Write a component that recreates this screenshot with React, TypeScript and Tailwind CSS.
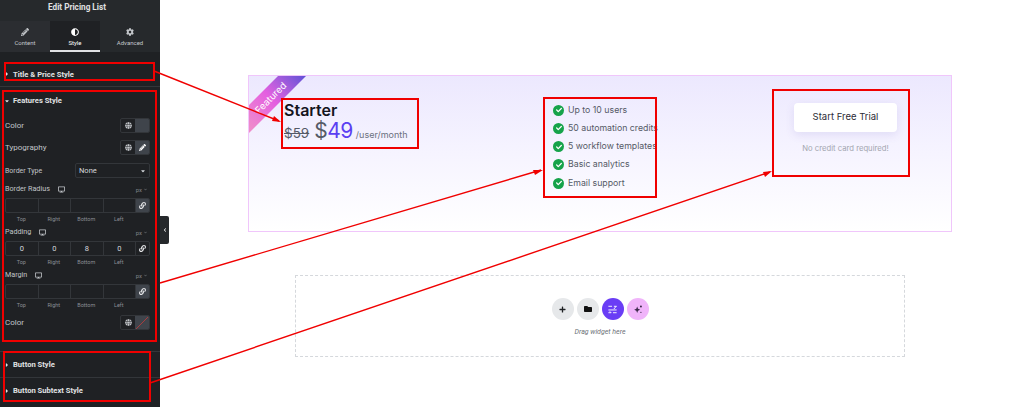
import { FaPencilAlt, FaAdjust, FaCog, FaGlobe, FaLink, FaDesktop, FaPlus, FaFolder, FaCaretRight, FaCaretDown, FaChevronLeft, FaChevronDown, FaCheck } from 'react-icons/fa';

function SectionHead({ label, open }: { label: string; open?: boolean }) {
  const Caret = open ? FaCaretDown : FaCaretRight;
  return (
    <div className="flex items-center gap-[3px] pl-[4px] text-[7.6px] font-bold text-[#e0e1e3]">
      <Caret className="w-[6px] h-[6px]" />
      <span>{label}</span>
    </div>
  );
}

function ColorRow({ label, slash, pen, className }: { label: string; slash?: boolean; pen?: boolean; className?: string }) {
  return (
    <div className={`flex items-center justify-between pl-[5px] pr-[10px] h-[15px] ${className ?? ''}`}>
      <span className="text-[8px] text-[#c2c5c9]">{label}</span>
      <div className="flex h-[15px] w-[30px] rounded-[2px] border border-[#33363a] overflow-hidden">
        <div className="flex-1 flex items-center justify-center">
          <FaGlobe className="w-[7px] h-[7px] text-[#c2c5c9]" />
        </div>
        <div className="flex-1 flex items-center justify-center bg-[#3f444b]">
          {pen && <FaPencilAlt className="w-[7px] h-[7px] text-white" />}
          {slash && (
            <svg viewBox="0 0 14 14" className="w-[14px] h-[14px]">
              <line x1="1" y1="13" x2="13" y2="1" stroke="#c23b3b" strokeWidth="0.8" />
            </svg>
          )}
        </div>
      </div>
    </div>
  );
}

function Dimension({ label, values, active, className }: { label: string; values: string[]; active?: boolean; className?: string }) {
  return (
    <div className={`pl-[5px] pr-[10px] ${className ?? ''}`}>
      <div className="flex items-center justify-between h-[12px]">
        <div className="flex items-center gap-[8px]">
          <span className="text-[7.2px] text-[#c2c5c9]">{label}</span>
          <FaDesktop className="w-[7px] h-[7px] text-[#c2c5c9]" />
        </div>
        <div className="flex items-center gap-[2px] text-[6px] text-[#7d8288] pr-[3px]">
          px <FaChevronDown className="w-[3px] h-[3px]" />
        </div>
      </div>
      <div className="flex h-[15px] mt-[3px] rounded-[2px] border border-[#33363a] overflow-hidden">
        {['Top', 'Right', 'Bottom', 'Left'].map((side, i) => (
          <div key={side} className="w-[32.5px] border-r border-[#33363a] flex items-center justify-center text-[7.5px] text-[#d5d8dc]">
            {values[i]}
          </div>
        ))}
        <div className={`flex-1 flex items-center justify-center ${active ? 'bg-[#3f444b]' : ''}`}>
          <FaLink className="w-[7px] h-[7px] text-[#e0e1e3]" />
        </div>
      </div>
      <div className="flex mt-[2px] h-[8px]">
        {['Top', 'Right', 'Bottom', 'Left'].map(side => (
          <div key={side} className="w-[32.5px] text-center text-[5.5px] leading-[8px] text-[#8a8e94]">{side}</div>
        ))}
      </div>
    </div>
  );
}

function Sidebar() {
  return (
    <aside className="w-[160px] shrink-0 h-full bg-[#1f2124] font-['Roboto',sans-serif] flex flex-col">
      <div className="h-[21px] pb-[6px] pr-[6px] bg-[#26292c] flex items-center justify-center text-[8.2px] font-bold text-[#e0e1e3]">
        Edit Pricing List
      </div>
      <div className="flex h-[31px] text-[#c2c5c9] bg-[#26292c]">
        <div className="w-[50px] flex flex-col items-center pt-[7px] gap-[3px] bg-[#2b2d31]">
          <FaPencilAlt className="w-[8px] h-[8px]" />
          <span className="text-[6px] leading-[8px]">Content</span>
        </div>
        <div className="w-[50px] flex flex-col items-center pt-[7px] gap-[3px] bg-[#1f2124] border-b-[2px] border-[#e0e1e3] text-white">
          <FaAdjust className="w-[8px] h-[8px]" />
          <span className="text-[6px] leading-[8px]">Style</span>
        </div>
        <div className="flex-1 flex flex-col items-center pt-[7px] gap-[3px]">
          <FaCog className="w-[8px] h-[8px]" />
          <span className="text-[6px] leading-[8px]">Advanced</span>
        </div>
      </div>
      <div className="h-[35px] flex items-end pb-[6px] border-b border-[#33363a]">
        <SectionHead label="Title & Price Style" />
      </div>
      <div className="pt-[8px]">
        <SectionHead label="Features Style" open />
        <ColorRow label="Color" className="mt-[12px]" />
        <ColorRow label="Typography" pen className="mt-[7px]" />
        <div className="flex items-center justify-between pl-[5px] pr-[10px] mt-[8px] h-[15px]">
          <span className="text-[7px] text-[#c2c5c9]">Border Type</span>
          <div className="w-[75px] h-[15px] rounded-[2px] border border-[#33363a] flex items-center justify-between px-[3px] text-[7.5px] text-[#d5d8dc]">
            None
            <FaCaretDown className="w-[6px] h-[6px]" />
          </div>
        </div>
        <Dimension label="Border Radius" values={['', '', '', '']} active className="mt-[5px]" />
        <Dimension label="Padding" values={['0', '0', '8', '0']} className="mt-[3px]" />
        <Dimension label="Margin" values={['', '', '', '']} active className="mt-[3px]" />
        <ColorRow label="Color" slash className="mt-[6px]" />
      </div>
      <div className="mt-[21px] h-[26px] flex items-center border-t border-[#33363a]">
        <SectionHead label="Button Style" />
      </div>
      <div className="h-[26px] flex items-center border-t border-[#33363a]">
        <SectionHead label="Button Subtext Style" />
      </div>
    </aside>
  );
}

function CheckItem({ text }: { text: string }) {
  return (
    <li className="flex items-center gap-[4px] h-[18.25px] text-[8.75px] text-[#555a66] whitespace-nowrap">
      <span className="w-[11px] h-[11px] rounded-full bg-[#16a34a] flex items-center justify-center shrink-0">
        <FaCheck className="w-[6px] h-[6px] text-white" />
      </span>
      {text}
    </li>
  );
}

function PricingCard() {
  return (
    <div className="relative ml-[88px] w-[704px] h-[157px] border border-[#f0c6fb] bg-gradient-to-b from-[#ece8fe] via-[#f6f4ff] to-white font-['Inter',sans-serif] flex">
      {/* corner ribbon */}
      <div className="absolute left-0 top-0 w-[57px] h-[57px] bg-gradient-to-tr from-[#f08fc8] via-[#e45fe0] to-[#5f4fd6] [clip-path:polygon(29px_0,57px_0,0_57px,0_29px)]" />
      <span className="absolute left-0 top-[15px] w-[44px] text-center text-[9.5px] text-white -rotate-45">Featured</span>

      <div className="w-[296px] pl-[35px] pt-[26px]">
        <div className="text-[16px] leading-[16px] font-semibold text-[#14141c]">Starter</div>
        <div className="flex items-baseline mt-[2px] whitespace-nowrap leading-[22px]">
          <span className="text-[13.5px] text-[#555a66] line-through">$59 </span>
          <span className="text-[21px] tracking-[-0.5px] text-[#555a66] ml-[5px]">$</span>
          <span className="text-[21px] tracking-[-0.5px] text-[#5b3ff2]">49</span>
          <span className="text-[9px] text-[#6b7080] ml-[3px]">/user/month</span>
        </div>
      </div>

      <ul className="w-[241px] pl-[8px] pt-[25px]">
        <CheckItem text="Up to 10 users" />
        <CheckItem text="50 automation credits" />
        <CheckItem text="5 workflow templates" />
        <CheckItem text="Basic analytics" />
        <CheckItem text="Email support" />
      </ul>

      <div className="flex flex-col items-center pt-[27px] ml-[8px]">
        <div className="w-[103px] h-[29px] rounded-[4px] bg-white shadow-[0_3px_10px_rgba(90,70,180,0.12)] flex items-center justify-center text-[9.5px] text-[#2c2c36]">
          Start Free Trial
        </div>
        <div className="mt-[11px] text-[7.7px] text-[#a3a6b0] whitespace-nowrap">No credit card required!</div>
      </div>
    </div>
  );
}

function DropZone() {
  return (
    <div className="ml-[135px] mt-[43px] w-[610px] h-[82px] border border-dashed border-[#d5d8dc] flex flex-col items-center pt-[22px] font-['Roboto',sans-serif]">
      <div className="flex gap-[3px]">
        <div className="w-[22px] h-[22px] rounded-full bg-[#e6e8ea] flex items-center justify-center">
          <FaPlus className="w-[7px] h-[7px] text-[#1f2124]" />
        </div>
        <div className="w-[22px] h-[22px] rounded-full bg-[#e6e8ea] flex items-center justify-center">
          <FaFolder className="w-[8px] h-[8px] text-[#111]" />
        </div>
        <div className="w-[22px] h-[22px] rounded-full bg-[#6a3df5] flex items-center justify-center">
          <svg viewBox="0 0 12 12" className="w-[11px] h-[11px]" fill="none" stroke="white" strokeWidth="1">
            <path d="M1.5 2.5h4M7.5 2.5h3M10 2.5L7.5 5.5M1.5 6.5h9M1.5 9.5h3M6.5 9.5h4M3 8l1.5 1.5" />
          </svg>
        </div>
        <div className="w-[22px] h-[22px] rounded-full bg-[#f0b4fa] flex items-center justify-center">
          <svg viewBox="0 0 12 12" className="w-[10px] h-[10px]" fill="#3b2a4a">
            <path d="M5 3l1 2.8L8.6 7 6 8 5 10.8 4 8 1.4 7 4 5.8z" />
            <circle cx="9.5" cy="3" r="1.2" />
            <circle cx="9.5" cy="10" r="0.8" />
          </svg>
        </div>
      </div>
      <div className="mt-[7px] text-[7px] italic text-[#6d7278]">Drag widget here</div>
    </div>
  );
}

const redBoxes = [
  'left-[4px] top-[62px] w-[151px] h-[19px]',
  'left-[2px] top-[90px] w-[155px] h-[252px]',
  'left-[3px] top-[351px] w-[148px] h-[51px]',
  'left-[281px] top-[98px] w-[138px] h-[51px]',
  'left-[543px] top-[97px] w-[114px] h-[101px]',
  'left-[772px] top-[89px] w-[138px] h-[88px]',
];

function Annotations() {
  return (
    <>
      {redBoxes.map(box => (
        <div key={box} className={`absolute ${box} border-2 border-[#f00000]`} />
      ))}
      <svg className="absolute left-0 top-0 w-[1024px] h-[407px] pointer-events-none" viewBox="0 0 1024 407" fill="none">
        <path d="M154 71L279 121" stroke="#f00000" strokeWidth="1.4" />
        <path d="M281 122L272 121L274 116z" fill="#f00000" />
        <path d="M160 283L541 170" stroke="#f00000" strokeWidth="1.4" />
        <path d="M543 170L535 175L533 170z" fill="#f00000" />
        <path d="M150 383L770 172" stroke="#f00000" strokeWidth="1.4" />
        <path d="M772 171L765 177L763 172z" fill="#f00000" />
      </svg>
    </>
  );
}

export default function App() {
  return (
    <div className="relative w-[1024px] h-[407px] overflow-hidden bg-white flex">
      <Sidebar />
      <div className="absolute left-[160px] top-[216px] w-[9px] h-[28px] bg-[#26292c] rounded-r-[2px] flex items-center justify-center">
        <FaChevronLeft className="w-[4px] h-[4px] text-white" />
      </div>
      <main className="flex-1 pt-[75px]">
        <PricingCard />
        <DropZone />
      </main>
      <Annotations />
    </div>
  );
}
